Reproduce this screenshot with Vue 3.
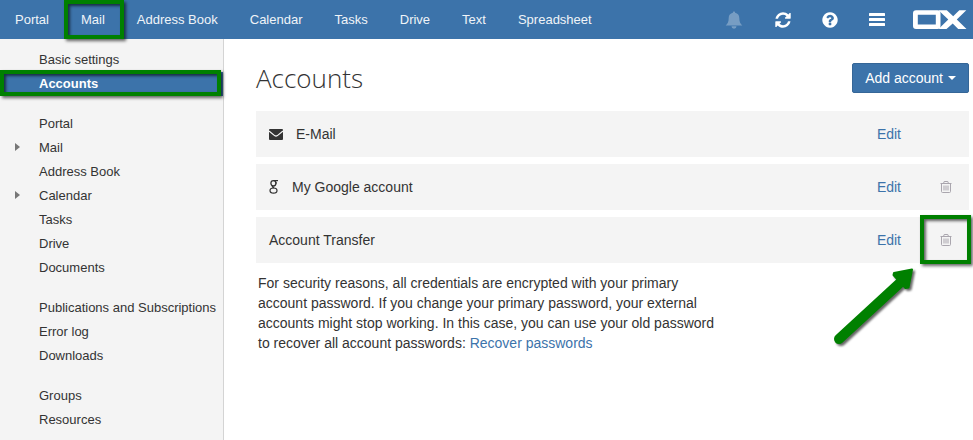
<script setup>
const apps = ['Portal', 'Mail', 'Address Book', 'Calendar', 'Tasks', 'Drive', 'Text', 'Spreadsheet']

const groups = [
  [{ label: 'Basic settings' }, { label: 'Accounts', selected: true }],
  [
    { label: 'Portal' },
    { label: 'Mail', expandable: true },
    { label: 'Address Book' },
    { label: 'Calendar', expandable: true },
    { label: 'Tasks' },
    { label: 'Drive' },
    { label: 'Documents' },
  ],
  [{ label: 'Publications and Subscriptions' }, { label: 'Error log' }, { label: 'Downloads' }],
  [{ label: 'Groups' }, { label: 'Resources' }],
]

const accounts = [
  { name: 'E-Mail', icon: 'mail' },
  { name: 'My Google account', icon: 'google', removable: true },
  { name: 'Account Transfer', removable: true, marked: true },
]
</script>

<template>
  <div class="page">
    <header class="topbar">
      <nav class="apps" aria-label="Applications">
        <a v-for="app in apps" :key="app" href="#" class="app">
          {{ app }}<span v-if="app === 'Mail'" class="mark mark-app"></span>
        </a>
      </nav>
      <div class="tools">
        <button type="button" class="tool dim" aria-label="Notifications">
          <svg width="18" height="18" viewBox="0 0 18 18" fill="currentColor">
            <path d="M7 0.6c.7 0 1.1.5 1.1 1.2 2.600.5 4.200 2.600 4.200 5.200 0 3.800.9 5.600 3 7.500H-1.300C.8 12.600 1.700 10.800 1.700 7c0-2.600 1.600-4.700 4.200-5.200C5.900 1.100 6.300.6 7 .6z" />
            <path d="M4.500 15.200h5a2.500 2.500 0 0 1-5 0z" />
          </svg>
        </button>
        <button type="button" class="tool" aria-label="Refresh">
          <svg width="18" height="18" viewBox="0 0 1792 1792" fill="currentColor">
            <path d="M1639 1056q0 5-1 7-64 268-268 434.500t-478 166.500q-146 0-282.500-55t-243.500-157l-129 129q-19 19-45 19t-45-19-19-45v-448q0-26 19-45t45-19h448q26 0 45 19t19 45-19 45l-137 137q71 66 161 102t187 36q134 0 250-65t186-179q11-17 53-117 8-23 30-23h192q13 0 22.500 9.500t9.500 22.500zm25-800v448q0 26-19 45t-45 19h-448q-26 0-45-19t-19-45 19-45l138-138q-148-137-349-137-134 0-250 65t-186 179q-11 17-53 117-8 23-30 23h-199q-13 0-22.500-9.500t-9.500-22.500v-7q65-268 270-434.500t480-166.500q146 0 284 55.500t245 156.500l130-129q19-19 45-19t45 19 19 45z" />
          </svg>
        </button>
        <button type="button" class="tool" aria-label="Help">
          <svg width="18" height="18" viewBox="0 0 1792 1792" fill="currentColor">
            <path d="M1024 1376v-192q0-14-9-23t-23-9h-192q-14 0-23 9t-9 23v192q0 14 9 23t23 9h192q14 0 23-9t9-23zm256-672q0-88-55.500-163t-138.500-116-170-41q-243 0-371 213-15 24 8 42l132 100q7 6 19 6 16 0 25-12 53-68 86-92 34-24 86-24 48 0 85.500 26t37.500 59q0 38-20 61t-68 45q-63 28-115.500 86.500t-52.500 125.500v36q0 14 9 23t23 9h192q14 0 23-9t9-23q0-19 21.500-49.500t54.500-49.500q32-18 49-28.500t46-35 44.500-48 28-60.500 12.500-81zm384 192q0 209-103 385.500t-279.500 279.500-385.500 103-385.500-103-279.500-279.500-103-385.500 103-385.500 279.500-279.500 385.500-103 385.500 103 279.500 279.500 103 385.500z" />
          </svg>
        </button>
        <button type="button" class="tool" aria-label="Menu">
          <svg width="18" height="18" viewBox="0 0 18 18" fill="currentColor">
            <rect x="1" y="2" width="16" height="3" rx="0.500" />
            <rect x="1" y="7" width="16" height="3" rx="0.500" />
            <rect x="1" y="12" width="16" height="3" rx="0.500" />
          </svg>
        </button>
        <svg class="logo" width="54" height="20" viewBox="0 0 54 20" role="img" aria-label="OX">
          <path fill="#fff" fill-rule="evenodd" d="M3 .3h21.500q3 0 3 3v12.700q0 3-3 3H3q-3 0-3-3V3.300q0-3 3-3zM4.800 4.800v9.800h18V4.800z" />
          <path fill="#fff" d="M25.500.3h8.300l6.400 5.900L46.300.3h7L43.800 9.600 53.500 19h-8.300l-5.500-5.600L33.500 19h-8l9.800-9.400z" />
        </svg>
      </div>
    </header>

    <div class="body">
      <nav class="sidebar" aria-label="Settings">
        <ul v-for="(group, g) in groups" :key="g" class="group">
          <li v-for="item in group" :key="item.label">
            <a href="#" class="item" :class="{ selected: item.selected }">
              <svg v-if="item.expandable" class="arrow" width="5" height="8" viewBox="0 0 5 8">
                <path d="M0 0l5 4-5 4z" fill="#777" />
              </svg>
              {{ item.label }}
              <span v-if="item.selected" class="mark mark-item"></span>
            </a>
          </li>
        </ul>
      </nav>

      <main class="content">
        <div class="heading">
          <h1>Accounts</h1>
          <button type="button" class="add">Add account<span class="caret"></span></button>
        </div>

        <ul class="accounts">
          <li v-for="account in accounts" :key="account.name" class="account">
            <svg v-if="account.icon === 'mail'" width="14" height="12" viewBox="0 0 14 12">
              <rect y="1" width="14" height="11" rx="1" fill="#333" />
              <path d="M0 3l5.600 4.600q1.400 1 2.800 0L14 3" fill="none" stroke="#f4f4f4" stroke-width="1.200" />
            </svg>
            <svg v-if="account.icon === 'google'" width="10" height="14" viewBox="0 0 10 14" fill="none" stroke="#333">
              <ellipse cx="4.400" cy="3.300" rx="2.500" ry="2.700" stroke-width="1.300" />
              <path d="M4.400.6H9" stroke-width="1.200" />
              <path d="M6.300 1q1.200 1 .8 2.800" stroke-width="1" />
              <path d="M3.600 5.800Q3 7 5 7.900" stroke-width="1.400" />
              <ellipse cx="4.500" cy="10.600" rx="3.500" ry="2.600" stroke-width="1.200" />
            </svg>
            <span class="name">{{ account.name }}</span>
            <a href="#" class="edit">Edit</a>
            <span class="remove-cell">
              <button v-if="account.removable" type="button" class="remove" :aria-label="'Delete ' + account.name">
                <svg width="12" height="14" viewBox="0 0 12 14" fill="none" stroke="currentColor">
                  <path d="M.5 3.500h11M3.500 3.500l.7-2h3.600l.7 2M1.500 3.500v8q0 1 1 1h7q1 0 1-1v-8" />
                  <path d="M4 5.500v5M6 5.500v5M8 5.500v5" />
                </svg>
              </button>
            </span>
            <template v-if="account.marked">
              <span class="mark mark-remove"></span>
              <svg class="pointer" width="90" height="86" viewBox="0 0 90 86" fill="#008000">
                <path d="M10 74L73 16" stroke="#008000" stroke-width="10" stroke-linecap="round" />
                <path d="M83 4.500L79.500 22.500 76.500 23 64.500 10 65 8z" stroke="#008000" stroke-width="2" stroke-linejoin="round" />
              </svg>
            </template>
          </li>
        </ul>

        <p class="note">
          For security reasons, all credentials are encrypted with your primary account password. If you
          change your primary password, your external accounts might stop working. In this case, you can
          use your old password to recover all account passwords: <a href="#">Recover passwords</a>
        </p>
      </main>
    </div>
  </div>
</template>

<style>
body {
  margin: 0;
  background: #fff;
}
</style>

<style scoped>
.page {
  display: flex;
  flex-direction: column;
  min-height: 100vh;
  font-family: "Liberation Sans", Arial, sans-serif;
  font-size: 14px;
  line-height: 20px;
  color: #333;
}
a {
  color: #3c73aa;
  text-decoration: none;
}
button {
  margin: 0;
  padding: 0;
  border: 0;
  background: none;
  font: inherit;
  cursor: pointer;
}
ul {
  margin: 0;
  padding: 0;
  list-style: none;
}
svg {
  display: block;
  flex: none;
  overflow: visible;
}
.topbar {
  display: flex;
  align-items: center;
  justify-content: space-between;
  height: 39px;
  padding: 0 6px 0 15px;
  background: #3c73aa;
}
.apps {
  display: flex;
  gap: 32px;
  font-size: 13px;
}
.app {
  position: relative;
  color: #f0f4f8;
  white-space: nowrap;
}
.tools {
  display: flex;
  align-items: center;
}
.tool {
  display: flex;
  justify-content: center;
  width: 47px;
  color: #fff;
}
.dim {
  opacity: 0.3;
}
.logo {
  margin-left: 13px;
}
.body {
  display: flex;
  flex: 1;
}
.sidebar {
  display: flex;
  flex: none;
  flex-direction: column;
  gap: 16px;
  box-sizing: border-box;
  width: 224px;
  padding: 9px 0;
  border-right: 1px solid #d4d4d4;
  background: #f4f4f4;
  font-size: 13px;
}
.item {
  display: block;
  position: relative;
  padding-left: 39px;
  line-height: 24px;
  color: #333;
  white-space: nowrap;
}
.selected {
  background: #3c73aa;
  color: #fff;
  font-weight: bold;
}
.arrow {
  position: absolute;
  top: 7px;
  left: 15px;
}
.content {
  flex: 1;
  min-width: 0;
  padding: 24px 4px 24px 32px;
}
.heading {
  display: flex;
  align-items: center;
  justify-content: space-between;
  margin-bottom: 18px;
}
h1 {
  margin: 0;
  font-family: "Open Sans", sans-serif;
  font-size: 26px;
  font-weight: 300;
  line-height: 30px;
}
.add {
  display: flex;
  align-items: center;
  gap: 5px;
  height: 30px;
  padding: 0 12px;
  border: 1px solid #356697;
  border-radius: 2px;
  background: #3c73aa;
  color: #fff;
}
.caret {
  border: 4px solid transparent;
  border-top-color: #fff;
  border-bottom: 0;
}
.accounts {
  display: flex;
  flex-direction: column;
  gap: 7px;
}
.account {
  display: flex;
  position: relative;
  align-items: center;
  gap: 13px;
  height: 46px;
  padding: 0 13px;
  background: #f4f4f4;
}
.name {
  flex: 1;
}
.remove-cell {
  display: flex;
  justify-content: center;
  width: 20px;
  margin-left: 22px;
}
.remove {
  color: #aaa6ae;
}
.note {
  max-width: 470px;
  margin: 10px 2px 0;
}
.mark {
  position: absolute;
  box-sizing: border-box;
  border: 4px solid #008000;
  box-shadow: 2px 2px 3px rgba(0, 0, 0, 0.6), inset 2px 2px 3px rgba(0, 0, 0, 0.6);
  pointer-events: none;
}
.mark-app {
  inset: -10px -19px -9px -17px;
}
.mark-item {
  inset: -2px 2px 0 0;
}
.mark-remove {
  top: -2px;
  right: -2px;
  width: 51px;
  height: 49px;
}
.pointer {
  position: absolute;
  top: 48px;
  right: 50px;
  filter: drop-shadow(2px 2px 1px rgba(0, 0, 0, 0.6));
  pointer-events: none;
}
</style>
